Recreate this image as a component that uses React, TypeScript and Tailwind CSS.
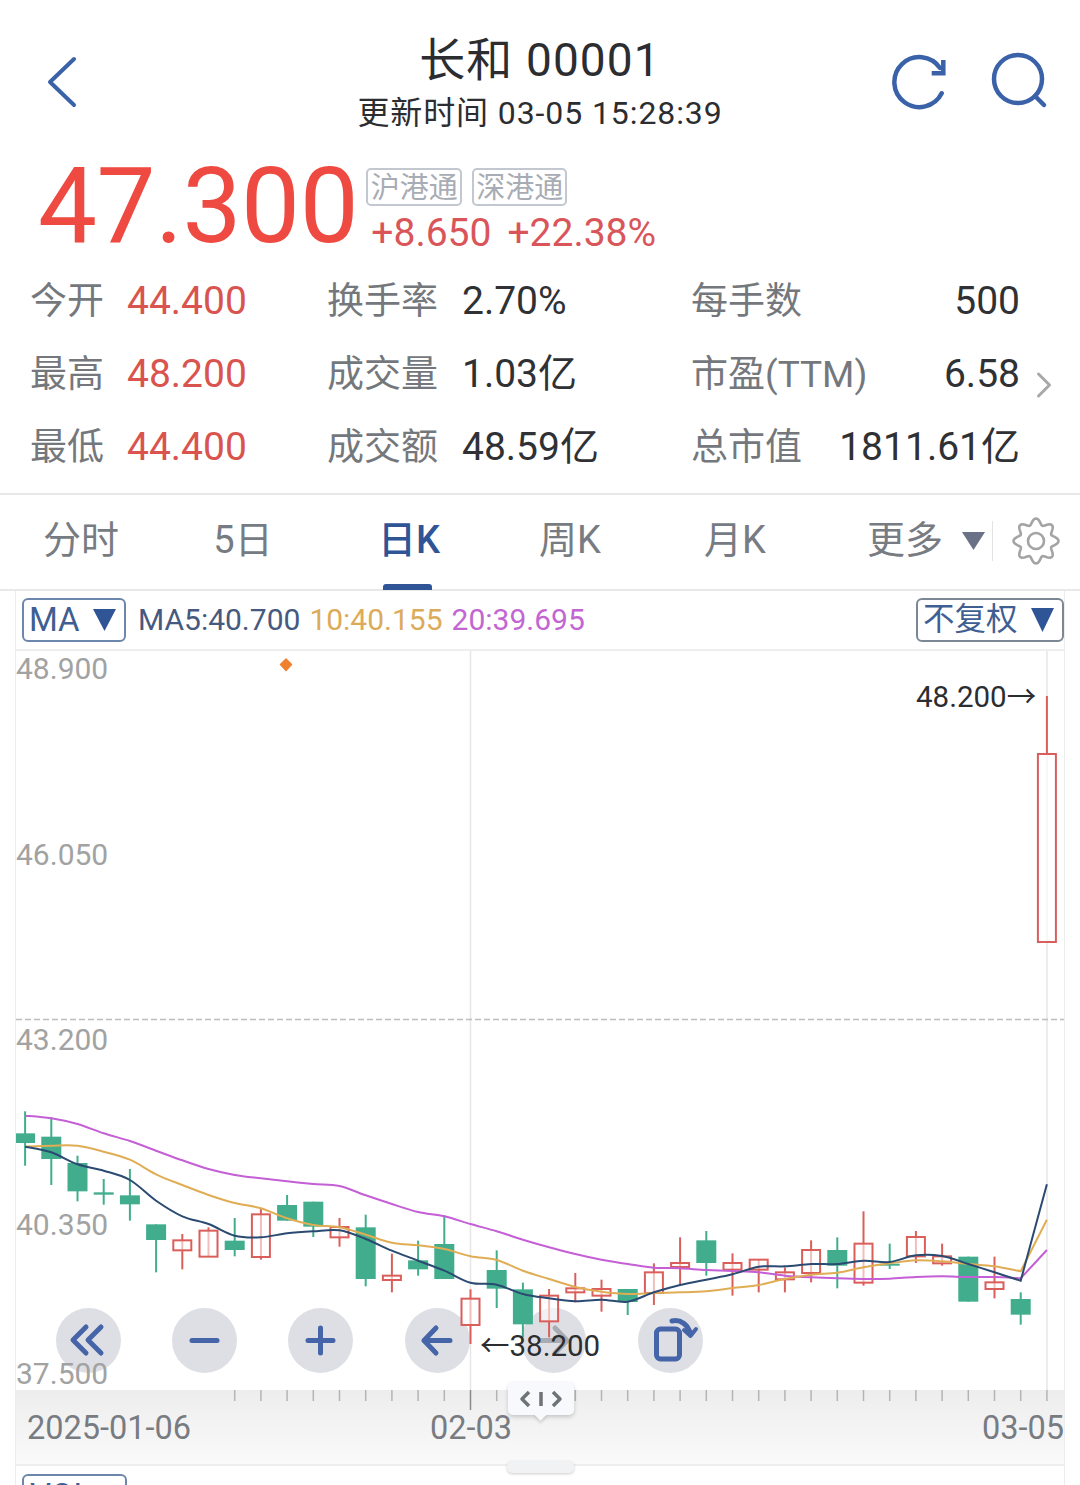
import React from "react";
import { ChevronRight } from "lucide-react";

const L = (z: number) => 1090 + z / 3;
const R = (z: number) => 1170 + z / 3;
const X = (i: number) => 25.1 + 26.2 * i;

type C = [number, number, number, number, 0 | 1];
const left: C[] = [
  [67, 230, 133, 162, 0], [85, 288, 143, 210, 0], [200, 337, 222, 307, 0], [270, 347, 310, 317, 0], [240, 395, 319, 346, 0],
  [406, 550, 406, 453, 0], [435, 541, 454, 484, 1], [415, 503, 425, 503, 1], [387, 502, 455, 483, 0], [360, 512, 376, 504, 1],
  [318, 395, 348, 395, 0], [338, 444, 338, 413, 0], [387, 473, 414, 445, 1], [377, 592, 415, 570, 0], [494, 610, 560, 573, 1],
  [455, 560, 514, 541, 0], [379, 570, 465, 570, 0], [601, 765, 629, 708, 1], [484, 657, 543, 599, 0], [581, 745, 601, 706, 0],
];
const right: C[] = [
  [360, 505, 380, 457, 1], [312, 400, 358, 370, 1], [332, 428, 360, 380, 1], [360, 438, 360, 399, 0], [283, 408, 310, 372, 1],
  [205, 350, 282, 294, 1], [186, 320, 214, 282, 0], [253, 380, 282, 302, 1], [272, 370, 272, 302, 1], [295, 370, 310, 331, 1],
  [214, 340, 243, 312, 1], [205, 358, 243, 290, 0], [127, 350, 224, 341, 1], [224, 300, 284, 290, 0], [186, 282, 204, 262, 1],
  [224, 290, 262, 283, 1], [263, 398, 263, 398, 0], [263, 388, 340, 360, 1], [370, 467, 390, 437, 0],
];
const candles: C[] = [
  ...left.map(([a, b, c, d, u]) => [L(a), L(b), L(c), L(d), u] as C),
  ...right.map(([a, b, c, d, u]) => [R(a), R(b), R(c), R(d), u] as C),
  [697, 755, 755, 943, 1],
];

const line = (l: number[], r: number[]) => {
  const p = [...l.map(L), ...r.map(R)].map((y, i) => [X(i), y] as [number, number]);
  let d = `M${p[0][0].toFixed(1)} ${p[0][1].toFixed(1)}`;
  for (let i = 0; i < p.length - 1; i++) {
    const p0 = p[Math.max(i - 1, 0)];
    const p1 = p[i];
    const p2 = p[i + 1];
    const p3 = i + 2 < p.length && i + 2 !== p.length - 1 ? p[i + 2] : p2;
    const sharp = i === p.length - 2;
    const c1x = p1[0] + (sharp ? 0 : (p2[0] - p0[0]) / 6);
    const c1y = p1[1] + (sharp ? 0 : (p2[1] - p0[1]) / 6);
    const c2x = p2[0] - (p3[0] - p1[0]) / 6;
    const c2y = p2[1] - (p3[1] - p1[1]) / 6;
    d += `C${c1x.toFixed(1)} ${c1y.toFixed(1)} ${c2x.toFixed(1)} ${c2y.toFixed(1)} ${p2[0].toFixed(1)} ${p2[1].toFixed(1)}`;
  }
  return d;
};

const purple = line(
  [80, 88, 105, 133, 156, 185, 214, 240, 258, 268, 277, 285, 291, 319, 345, 369, 382, 405, 427, 452],
  [235, 255, 272, 285, 296, 298, 303, 306, 310, 320, 325, 328, 330, 329, 324, 322, 324, 324, 328, 243]
);
const yellow = line(
  [173, 170, 170, 188, 212, 256, 288, 318, 342, 358, 388, 408, 415, 437, 461, 469, 480, 502, 513, 545],
  [330, 354, 368, 375, 372, 370, 367, 357, 348, 330, 317, 311, 295, 283, 274, 277, 285, 292, 307, 152]
);
const navy = line(
  [173, 190, 226, 245, 273, 335, 382, 405, 440, 445, 433, 427, 424, 450, 485, 515, 545, 581, 587, 615],
  [388, 397, 392, 398, 370, 348, 332, 316, 293, 292, 285, 285, 275, 279, 259, 261, 285, 310, 335, 46]
);

const gearPath = (() => {
  const pts: string[] = [];
  for (let i = 0; i <= 160; i++) {
    const t = (i / 160) * Math.PI * 2;
    const r = 19.5 + 3 * Math.cos(8 * t);
    pts.push(`${(25 + r * Math.cos(t)).toFixed(2)},${(25 + r * Math.sin(t)).toFixed(2)}`);
  }
  return "M" + pts.join("L") + "Z";
})();

function Triangle({ className }: { className: string }) {
  return (
    <svg viewBox="0 0 24 24" className={className} fill="currentColor" preserveAspectRatio="none">
      <path d="M0 0H24L12 24Z" />
    </svg>
  );
}

const rows = [
  { a: "今开", av: "44.400", b: "换手率", bv: "2.70%", c: "每手数", cv: "500" },
  { a: "最高", av: "48.200", b: "成交量", bv: "1.03亿", c: "市盈(TTM)", cv: "6.58", chevron: true },
  { a: "最低", av: "44.400", b: "成交额", bv: "48.59亿", c: "总市值", cv: "1811.61亿" },
];

const tabs = [
  { t: "分时", w: "w-[162px]" },
  { t: "5日", w: "w-[162px]" },
  { t: "日K", w: "w-[170px]", active: true },
  { t: "周K", w: "w-[152px]" },
  { t: "月K", w: "w-[178px]" },
];

function CircleBtn({ cx, children }: { cx: string; children: React.ReactNode }) {
  return (
    <div className={`absolute top-[657px] ${cx} h-[65px] w-[65px] rounded-full bg-[#dedfe4]`}>
      <svg viewBox="0 0 65 65" className="h-full w-full" fill="none" stroke="#4565a8" strokeWidth="5" strokeLinecap="round" strokeLinejoin="round">
        {children}
      </svg>
    </div>
  );
}

function AxisLabel({ top, children }: { top: string; children: React.ReactNode }) {
  return <div className={`absolute left-0 ${top} text-[30px] leading-[36px] text-[#a2a2a2]`}>{children}</div>;
}

export default function App() {
  return (
    <div className="relative h-[1485px] w-[1080px] overflow-hidden bg-white font-[Roboto,'Noto_Sans_CJK_SC',sans-serif] text-[#2b2d31]">
      {/* header */}
      <header className="grid h-[150px] grid-cols-[1fr_auto_1fr] items-start">
        <div className="pl-[47px] pt-[56px]">
          <svg width="30" height="52" viewBox="0 0 30 52" fill="none" stroke="#3a62a8" strokeWidth="4" strokeLinecap="round" strokeLinejoin="round">
            <path d="M27 3 3 26l24 23" />
          </svg>
        </div>
        <div className="flex flex-col items-center pt-[33px]">
          <div className="text-[46px] leading-[54px] tracking-[1.1px]">长和 00001</div>
          <div className="mt-[5px] text-[32px] leading-[42px] tracking-[0.9px]">更新时间 03-05 15:28:39</div>
        </div>
        <div className="flex justify-end pr-[31px] pt-[52px]">
          <svg width="56" height="56" viewBox="0 0 56 56" fill="none" stroke="#3a62a8" strokeWidth="4.5" strokeLinecap="round" className="mr-[43px] mt-[2px]">
            <path d="M49.700 39.300A25 25 0 1 1 48 14" />
            <path d="M51.300 6V19.300H39.700" strokeLinecap="butt" />
          </svg>
          <svg width="58" height="58" viewBox="0 0 58 58" fill="none" stroke="#3a62a8" strokeWidth="4.500" strokeLinecap="round">
            <circle cx="27" cy="27" r="24" />
            <path d="M44 44 53 53" />
          </svg>
        </div>
      </header>

      {/* price */}
      <section className="flex h-[114px] items-start pl-[38px]">
        <div className="mt-[-3px] text-[105px] leading-[120px] tracking-[-0.4px] text-[#ee4a41]">47.300</div>
        <div className="ml-[8px] flex flex-col pt-[18px]">
          <div className="flex gap-[10px]">
            <span className="flex h-[38px] w-[96px] items-center justify-center rounded-[5px] border-2 border-[#c3c7cf] pt-[3px] text-[29px] leading-none text-[#a8acb4]">沪港通</span>
            <span className="flex h-[38px] w-[95px] items-center justify-center rounded-[5px] border-2 border-[#c3c7cf] pt-[3px] text-[29px] leading-none text-[#a8acb4]">深港通</span>
          </div>
          <div className="ml-[5px] mt-[4px] flex gap-[16px] text-[39px] leading-[46px] text-[#d9555a]">
            <span>+8.650</span>
            <span>+22.38%</span>
          </div>
        </div>
      </section>

      {/* stats */}
      <section className="flex flex-col pl-[30px] pt-[1px]">
        {rows.map((r) => (
          <div key={r.a} className="flex h-[73px] items-center text-[39px]">
            <span className="w-[97px] text-[37px] text-[#74787d]">{r.a}</span>
            <span className="w-[200px] text-[#d9534f]">{r.av}</span>
            <span className="w-[135px] text-[37px] text-[#74787d]">{r.b}</span>
            <span className="w-[229px] text-[#2f3134]">{r.bv}</span>
            <span className="text-[37px] text-[#74787d]">{r.c}</span>
            <span className="ml-auto mr-[60px] text-[#2f3134]">{r.cv}</span>
            {r.chevron && <ChevronRight className="absolute left-[1022px] mt-[20px] h-[44px] w-[44px] text-[#a8a8a8]" strokeWidth={1.6} />}
          </div>
        ))}
      </section>

      {/* tabs */}
      <nav className="relative mt-[9px] flex h-[98px] items-center border-y-2 border-[#e8e8e8] pb-[3px]">
        {tabs.map((t) => (
          <div key={t.t} className={`${t.w} relative text-center text-[38px] ${t.active ? "font-medium text-[#2f5597]" : "text-[#777b82]"}`}>
            {t.t}
          </div>
        ))}
        <div className="ml-[43px] text-[38px] text-[#777b82]">更多</div>
        <Triangle className="ml-[19px] mt-[1px] h-[18px] w-[23px] text-[#6b7287]" />
        <div className="ml-[7px] h-[40px] w-px bg-[#e3e3e3]" />
        <svg width="50" height="50" viewBox="0 0 50 50" fill="none" stroke="#a4a4a4" strokeWidth="2.600" className="ml-[18px]">
          <path d={gearPath} />
          <circle cx="25" cy="25" r="8" />
        </svg>
        <div className="absolute bottom-[-1px] left-[383px] h-[6px] w-[49px] rounded-t-[3px] bg-[#2f5597]" />
      </nav>

      {/* chart panel */}
      <section className="relative mx-[15px] h-[896px] w-[1050px] border-x border-[#ececec]">
        <div className="flex h-[60px] items-center border-b-2 border-[#eeeeee]">
          <div className="ml-[6px] flex h-[44px] w-[104px] items-center rounded-[6px] border-2 border-[#6d86ab] pl-[5px] text-[33px] text-[#3f5f92]">
            MA
            <Triangle className="ml-[13px] h-[22px] w-[23px] text-[#2f5597]" />
          </div>
          <div className="ml-[12px] flex text-[30px] leading-none">
            <span className="text-[#46597f]">MA5:40.700</span>
            <span className="ml-[9px] text-[#dcab5a]">10:40.155</span>
            <span className="ml-[9px] text-[#c266d2]">20:39.695</span>
          </div>
          <div className="ml-auto flex h-[44px] w-[148px] items-center rounded-[6px] border-2 border-[#7b8794] pl-[5px] text-[31.5px] text-[#3f5f92]">
            不复权
            <Triangle className="ml-[13px] h-[24px] w-[23px] text-[#2f5597]" />
          </div>
        </div>

        <div className="relative h-[739px] overflow-hidden">
          <CircleBtn cx="left-[40px]">
            <path d="M30 19 17 32l13 13" /><path d="M45 19 32 32l13 13" />
          </CircleBtn>
          <CircleBtn cx="left-[156px]"><path d="M20 32.500H45" /></CircleBtn>
          <CircleBtn cx="left-[272px]"><path d="M20 32.500H45M32.500 20V45" /></CircleBtn>
          <CircleBtn cx="left-[389px]"><path d="M45 32.500H19M31 20 19 32.500 31 45" /></CircleBtn>
          <div className="absolute left-[505px] top-[657px] h-[65px] w-[65px] rounded-full bg-[#dedfe4]">
            <svg viewBox="0 0 65 65" className="h-full w-full" fill="none" stroke="#a9abb3" strokeWidth="5" strokeLinecap="round" strokeLinejoin="round">
              <path d="M20 32.500H46M34 20 46 32.500 34 45" />
            </svg>
          </div>
          <CircleBtn cx="left-[622px]">
            <rect x="18.500" y="21" width="23" height="30" rx="4" />
            <path d="M34 13C43 11 50 17 52.500 26" />
            <path d="M46 22 52.500 28 58 21" strokeWidth="4" />
          </CircleBtn>

          <svg viewBox="16 652 1048 739" className="absolute left-0 top-0 h-[739px] w-[1048px]" fill="none">
            <path d="M470.500 652V1391M1047 652V1391" stroke="#e6e6e6" strokeWidth="1.500" />
            <path d="M16 1020.500H1064" stroke="#bdbdbd" strokeWidth="1.500" strokeDasharray="6 3" />
            <path d="M286 660 291.500 665.500 286 671.500 280.500 665.500Z" fill="#f08030" stroke="#f08030" strokeWidth="1.500" strokeLinejoin="round" />
            {candles.map(([wt, wb, bt, bb, up], i) => {
              const x = X(i);
              const color = up ? "#da5f5b" : "#41ad8c";
              return (
                <g key={i}>
                  <path d={`M${x} ${wt}V${wb}`} stroke={color} strokeWidth="2" />
                  {up ? (
                    <rect x={x - 9} y={bt} width="18" height={Math.max(bb - bt, 1)} stroke={color} strokeWidth="2" fill="#ffffff" fillOpacity="0.6" />
                  ) : (
                    <rect x={x - 10} y={bt} width="20" height={Math.max(bb - bt, 2)} fill={color} />
                  )}
                </g>
              );
            })}
            <path d={purple} stroke="#c45fd6" strokeWidth="2" />
            <path d={yellow} stroke="#e0ad55" strokeWidth="2" />
            <path d={navy} stroke="#2a4a72" strokeWidth="2" />
          </svg>

          <AxisLabel top="top-0">48.900</AxisLabel>
          <AxisLabel top="top-[186px]">46.050</AxisLabel>
          <AxisLabel top="top-[371px]">43.200</AxisLabel>
          <AxisLabel top="top-[556px]">40.350</AxisLabel>
          <AxisLabel top="top-[705px]">37.500</AxisLabel>
          <div className="absolute left-[900px] top-[28px] text-[29.5px] leading-[36px] text-[#2b2d31]">48.200→</div>
          <div className="absolute left-[464px] top-[677px] text-[29.5px] leading-[36px] text-[#2b2d31]">←38.200</div>
        </div>

        {/* date axis */}
        <div className="relative flex h-[76px] items-center justify-between border-b-2 border-[#eeeeee] bg-linear-to-b from-[#ededed] to-[#fafafa] pl-[11px] pt-[2px] text-[32.5px] text-[#787c82]">
          <svg viewBox="16 1390 1048 22" className="absolute left-0 top-0 h-[22px] w-[1048px]" fill="none" strokeWidth="1.500">
            {Array.from({ length: 32 }, (_, k) => {
              const i = k + 8;
              return <path key={i} d={`M${X(i)} 1390V${i === 17 ? 1410 : 1401}`} stroke={i === 17 ? "#8a8a8a" : "#b4b4b4"} />;
            })}
          </svg>
          <span>2025-01-06</span>
          <span className="absolute left-[414px]">02-03</span>
          <span>03-05</span>
        </div>

        {/* VOL selector */}
        <div className="ml-[6px] mt-[8px] flex h-[44px] w-[105px] items-center rounded-[6px] border-2 border-[#6d86ab] pl-[6px] text-[33px] text-[#3f5f92]">
          VOL
          <Triangle className="ml-[8px] h-[22px] w-[22px] text-[#2f5597]" />
        </div>
      </section>

      {/* range handles */}
      <div className="absolute left-[508px] top-[1382px] flex h-[33px] w-[66px] items-center justify-center rounded-[5px] bg-[#f8f9fc] shadow-[0_2px_4px_rgba(0,0,0,0.18)]">
        <div className="absolute bottom-[-4px] left-[28px] h-[9px] w-[9px] rotate-45 bg-[#f8f9fc] shadow-[2px_2px_3px_rgba(0,0,0,0.12)]" />
        <svg width="44" height="20" viewBox="0 0 44 20" fill="none" stroke="#6e7378" strokeWidth="3.500" strokeLinejoin="round" className="relative">
          <path d="M10 3 3 10l7 7M22 3V17M34 3l7 7-7 7" />
        </svg>
      </div>
      <div className="absolute left-[507px] top-[1461px] h-[12px] w-[67px] rounded-[5px] bg-[#f1f2f4] shadow-[0_1px_3px_rgba(0,0,0,0.2)]" />
    </div>
  );
}
